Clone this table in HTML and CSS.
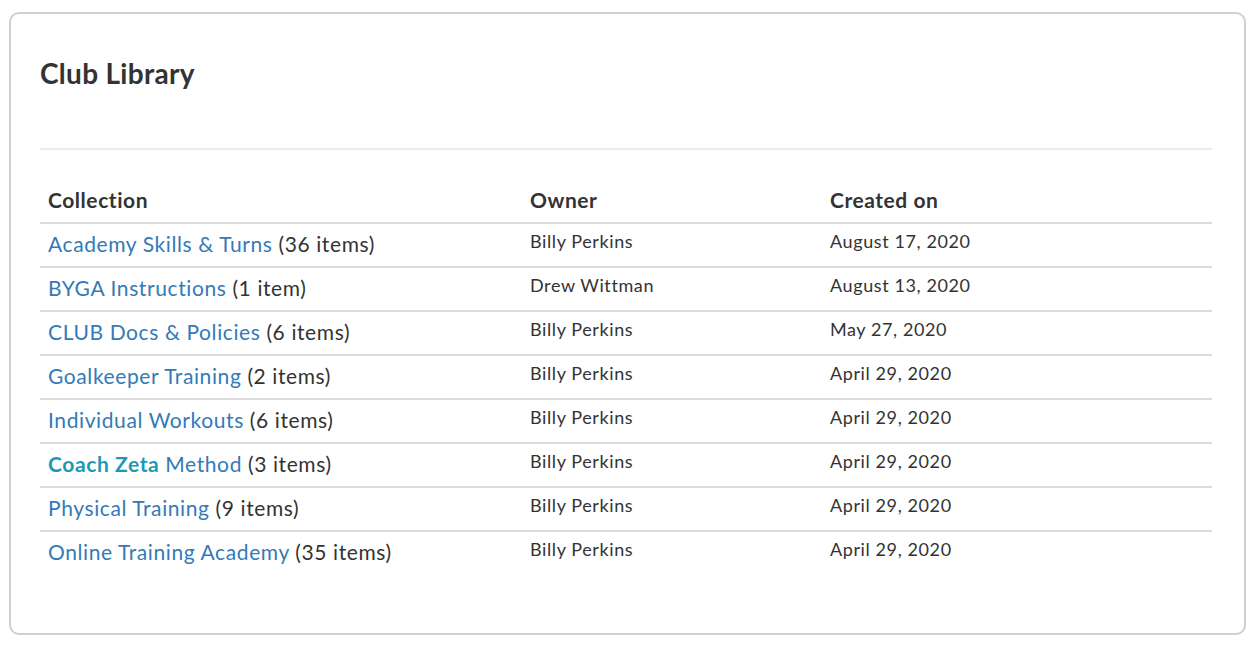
FILE: index.html
```html
<!DOCTYPE html>
<html>
<head>
<meta charset="utf-8">
<link rel="stylesheet" href="styles.css">
</head>
<body>
<div class="card">
  <h2 class="title">Club Library</h2>
  <div class="sep"></div>
  <table class="lib">
    <colgroup><col class="c1"><col class="c2"><col class="c3"></colgroup>
    <thead>
      <tr><th>Collection</th><th>Owner</th><th>Created on</th></tr>
    </thead>
    <tbody>
      <tr><td class="coll"><a href="#">Academy Skills &amp; Turns</a> (36 items)</td><td>Billy Perkins</td><td>August 17, 2020</td></tr>
      <tr><td class="coll"><a href="#">BYGA Instructions</a> (1 item)</td><td>Drew Wittman</td><td>August 13, 2020</td></tr>
      <tr><td class="coll"><a href="#">CLUB Docs &amp; Policies</a> (6 items)</td><td>Billy Perkins</td><td>May 27, 2020</td></tr>
      <tr><td class="coll"><a href="#">Goalkeeper Training</a> (2 items)</td><td>Billy Perkins</td><td>April 29, 2020</td></tr>
      <tr><td class="coll"><a href="#">Individual Workouts</a> (6 items)</td><td>Billy Perkins</td><td>April 29, 2020</td></tr>
      <tr><td class="coll"><a href="#"><b class="brand">Coach Zeta</b> Method</a> (3 items)</td><td>Billy Perkins</td><td>April 29, 2020</td></tr>
      <tr><td class="coll"><a href="#">Physical Training</a> (9 items)</td><td>Billy Perkins</td><td>April 29, 2020</td></tr>
      <tr><td class="coll"><a href="#">Online Training Academy</a> (35 items)</td><td>Billy Perkins</td><td>April 29, 2020</td></tr>
    </tbody>
  </table>
</div>
</body>
</html>
```
FILE: styles.css
```css
html, body {
  margin: 0;
  padding: 0;
  background: #fff;
}
body {
  padding: 12px 10px 0 9px;
  font-family: Lato, "Open Sans", sans-serif;
  color: #333;
}
.card {
  border: 2px solid #cfcfcf;
  border-radius: 10px;
  padding: 42px 32px 59px 29px;
  background: #fff;
}
.title {
  margin: 0;
  font-size: 28px;
  line-height: 34px;
  font-weight: 700;
  letter-spacing: 0.3px;
  color: #333;
}
.sep {
  margin-top: 58px;
  height: 2px;
  background: #ececec;
}
.lib {
  margin-top: 30px;
  width: 100%;
  border-collapse: collapse;
}
.c1 { width: 482px; }
.c2 { width: 300px; }
th, td {
  text-align: left;
  vertical-align: top;
  padding: 7px 8px 0 8px;
  height: 35px;
}
th {
  font-size: 21px;
  line-height: 25px;
  font-weight: 700;
  letter-spacing: 0.55px;
  border-bottom: 2px solid #dcdcdc;
}
td {
  font-size: 18px;
  line-height: 21px;
  letter-spacing: 0.6px;
  border-bottom: 2px solid #dcdcdc;
}
tbody tr:last-child td {
  border-bottom: none;
}
td.coll {
  font-size: 21px;
  line-height: 25px;
  letter-spacing: 0.6px;
}
a {
  color: #337ab7;
  text-decoration: none;
}
.brand {
  color: #1b9ab6;
  font-weight: 700;
}
```
